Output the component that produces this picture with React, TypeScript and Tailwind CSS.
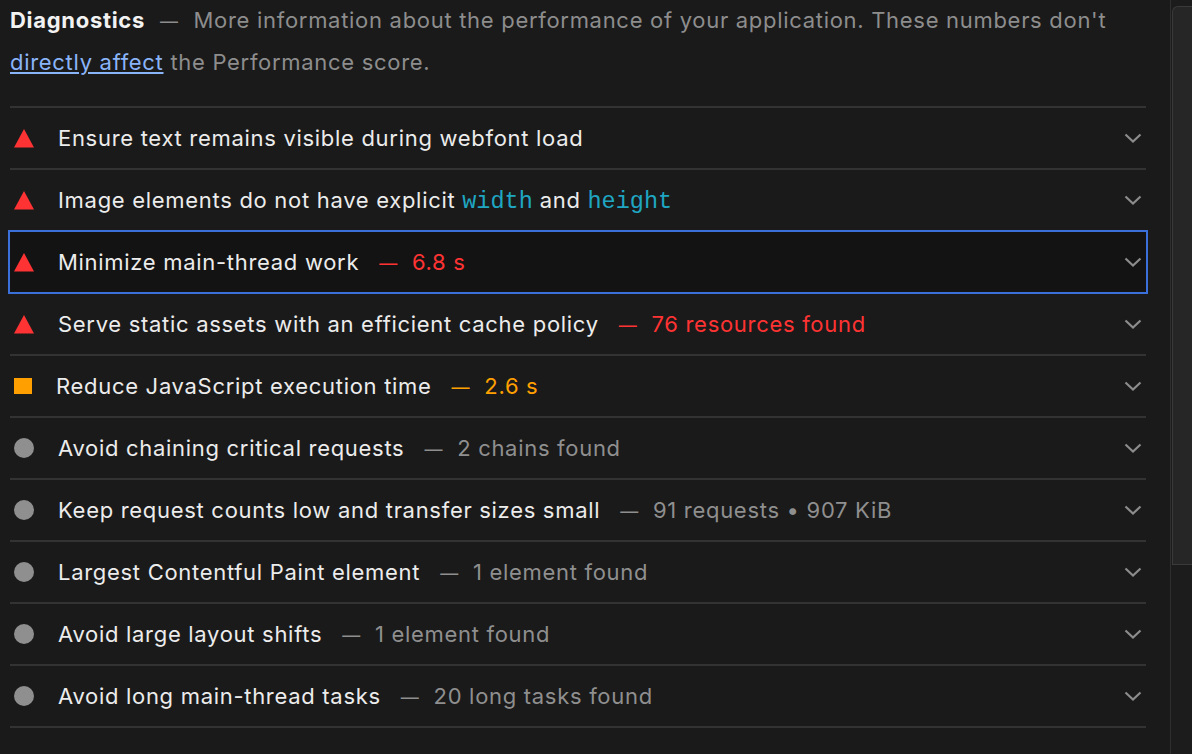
import React from "react";

type Status = "fail" | "average" | "info";

interface Audit {
  title: React.ReactNode;
  status: Status;
  value?: string;
  focused?: boolean;
}

const mono = "font-['Liberation_Mono',monospace] text-[23.5px] leading-none tracking-normal text-[#1fa6c2]";

const audits: Audit[] = [
  { title: "Ensure text remains visible during webfont load", status: "fail" },
  {
    title: (
      <>
        Image elements do not have explicit <span className={mono}>width</span> and{" "}
        <span className={mono}>height</span>
      </>
    ),
    status: "fail",
  },
  { title: "Minimize main-thread work", status: "fail", value: "6.8 s", focused: true },
  { title: "Serve static assets with an efficient cache policy", status: "fail", value: "76 resources found" },
  { title: "Reduce JavaScript execution time", status: "average", value: "2.6 s" },
  { title: "Avoid chaining critical requests", status: "info", value: "2 chains found" },
  { title: "Keep request counts low and transfer sizes small", status: "info", value: "91 requests • 907 KiB" },
  { title: "Largest Contentful Paint element", status: "info", value: "1 element found" },
  { title: "Avoid large layout shifts", status: "info", value: "1 element found" },
  { title: "Avoid long main-thread tasks", status: "info", value: "20 long tasks found" },
];

function StatusIcon({ status }: { status: Status }) {
  if (status === "fail") {
    return (
      <svg width="20" height="20" viewBox="0 0 20 20" className="mr-6 shrink-0">
        <polygon points="10,1 20,19.5 0,19.5" fill="#ff3333" />
      </svg>
    );
  }
  if (status === "average") {
    return <div className="mr-6 h-4 w-[18px] shrink-0 bg-[#ffa000]" />;
  }
  return <div className="mr-6 h-5 w-5 shrink-0 rounded-full bg-[#8f8f8f]" />;
}

function Chevron() {
  return (
    <svg width="18" height="10" viewBox="0 0 18 10" className="ml-auto shrink-0">
      <path d="M1.5 1.5 L9 8.5 L16.5 1.5" fill="none" stroke="#8c8c8c" strokeWidth="2.2" />
    </svg>
  );
}

function AuditRow({ audit }: { audit: Audit }) {
  const valueColor =
    audit.status === "fail" ? "text-[#ff3333]" : audit.status === "average" ? "text-[#ffa000]" : "text-[#8f8f8f]";
  return (
    <div
      className={`relative flex h-[62px] items-center border-b-2 border-[#333333] pl-1 pr-1 ${
        audit.focused ? "bg-[#131313]" : ""
      }`}
    >
      {audit.focused && (
        <div className="pointer-events-none absolute -left-[2px] -right-[2px] -top-[2px] -bottom-[2px] border-2 border-[#3b6fd9]" />
      )}
      <StatusIcon status={audit.status} />
      <span className="whitespace-nowrap text-[#ececec]">{audit.title}</span>
      {audit.value && (
        <span className={`ml-5 whitespace-nowrap ${valueColor}`}>
          <span className="text-[18px]">—</span>
          <span className="ml-3.5">{audit.value}</span>
        </span>
      )}
      <Chevron />
    </div>
  );
}

export default function App() {
  return (
    <div className="flex h-[754px] w-[1192px] overflow-hidden bg-[#1a1a1a] font-['Inter',sans-serif] text-[22px] tracking-[0.7px]">
      <div className="w-[1170px] shrink-0 pl-[10px] pr-[24px]">
        <div className="border-b-2 border-[#333333] pb-[23px] leading-[41px]">
          <span className="font-bold text-[#f2f2f2]">Diagnostics</span>
          <span className="text-[#8d8d8d]">
            {" "}
            <span className="mx-2 text-[18px]">—</span> More information about the performance of your application.
            These numbers don't
            <br />
            <a className="text-[#8ab4f8] underline underline-offset-2">directly affect</a> the Performance score.
          </span>
        </div>
        {audits.map((a, i) => (
          <AuditRow key={i} audit={a} />
        ))}
      </div>
      <div className="flex-1 border-l border-[#2f2f2f] bg-[#1c1c1c] pt-[6px]">
        <div className="ml-px h-[559px] rounded-tl-md border-l border-t border-b border-[#3a3a3a] bg-[#262626]" />
      </div>
    </div>
  );
}
